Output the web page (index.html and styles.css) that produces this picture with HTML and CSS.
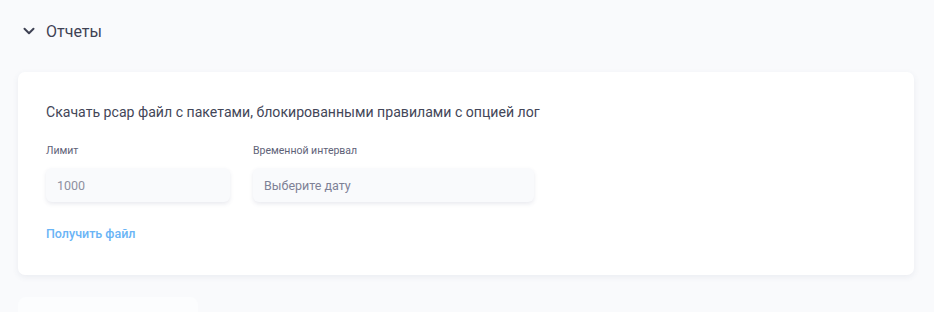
FILE: index.html
```html
<!DOCTYPE html>
<html lang="ru">
<head>
<meta charset="utf-8">
<link rel="stylesheet" href="styles.css">
</head>
<body>
<div class="page">
  <div class="section-head">
    <svg class="chevron" width="14" height="14" viewBox="0 0 14 14"><path d="M2.5 4.8 L7 9.2 L11.5 4.8" fill="none" stroke="#3f4254" stroke-width="2" stroke-linecap="round" stroke-linejoin="round"/></svg>
    <span class="section-title">Отчеты</span>
  </div>
  <div class="card">
    <div class="card-title">Скачать pcap файл с пакетами, блокированными правилами с опцией лог</div>
    <div class="fields">
      <div class="field field-limit">
        <div class="label">Лимит</div>
        <div class="input">1000</div>
      </div>
      <div class="field field-date">
        <div class="label">Временной интервал</div>
        <div class="input">Выберите дату</div>
      </div>
    </div>
    <div class="link">Получить файл</div>
  </div>
  <div class="ghost"></div>
</div>
</body>
</html>
```
FILE: styles.css
```css
html, body { margin: 0; padding: 0; }
body {
  background: #f9fafc;
  font-family: Roboto, "Noto Sans", sans-serif;
  width: 934px;
  height: 312px;
  overflow: hidden;
}
.page { padding: 0 20px 0 18px; height: 312px; overflow: hidden; }
.section-head {
  display: flex;
  align-items: center;
  height: 62px;
  padding-left: 4px;
}
.chevron { margin-right: 10px; }
.section-title {
  font-size: 16px;
  color: #3f4254;
}
.card {
  margin-top: 10px;
  background: #fff;
  border-radius: 7px;
  box-shadow: 0 2px 6px rgba(70, 80, 120, 0.08);
  padding: 29px 28px 0 28px;
  height: 174px;
}
.card-title {
  font-size: 14.1px;
  color: #434658;
  line-height: 22px;
}
.fields {
  display: flex;
  gap: 23px;
  margin-top: 21px;
}
.label {
  font-size: 10.5px;
  color: #5e6278;
  line-height: 14px;
  margin-bottom: 10px;
}
.input {
  height: 34px;
  box-sizing: border-box;
  background: #f9fafc;
  border-radius: 6px;
  box-shadow: 0 2px 4px rgba(70, 80, 120, 0.12);
  font-size: 12.5px;
  color: #8e90a0;
  display: flex;
  align-items: center;
  padding-left: 11px;
}
.field-date .input { color: #7e8196; }
.field-limit { width: 184px; }
.field-date { width: 281px; }
.link {
  margin-top: 24px;
  font-size: 12.5px;
  font-weight: 500;
  color: #69b4f6;
}
.ghost {
  margin-top: 22px;
  width: 180px;
  height: 30px;
  margin-left: 0;
  background: #fcfdfe;
  border-radius: 8px;
}
```
